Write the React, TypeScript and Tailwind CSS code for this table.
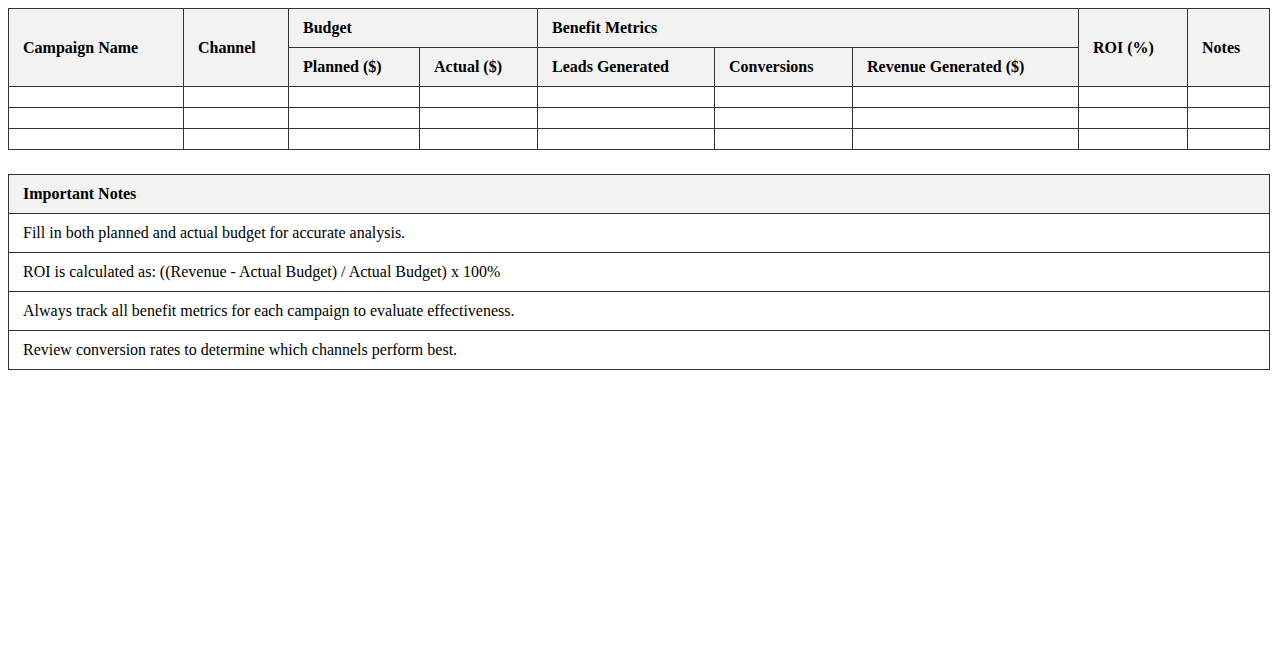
const NOTES = [
  "Fill in both planned and actual budget for accurate analysis.",
  "ROI is calculated as: ((Revenue - Actual Budget) / Actual Budget) x 100%",
  "Always track all benefit metrics for each campaign to evaluate effectiveness.",
  "Review conversion rates to determine which channels perform best.",
];

const COLS = [175, 105, 131, 118, 177, 138, 226, 109, 82];

const th =
  "border border-[#333] bg-[#f2f2f2] px-[14px] py-[10px] text-left font-bold align-middle";
const td = "border border-[#333] px-[14px] py-[10px] h-[21px]";

export default function App() {
  return (
    <div className="m-2 font-['Liberation_Serif',serif] text-[16px] leading-[normal] text-black bg-white">
      {/* Campaign tracking table */}
      <table className="w-full table-fixed border-collapse">
        <colgroup>
          {COLS.map((w, i) => (
            <col key={i} style={{ width: w }} />
          ))}
        </colgroup>
        <thead>
          <tr>
            <th rowSpan={2} className={th}>
              Campaign Name
            </th>
            <th rowSpan={2} className={th}>
              Channel
            </th>
            <th colSpan={2} className={th}>
              Budget
            </th>
            <th colSpan={3} className={th}>
              Benefit Metrics
            </th>
            <th rowSpan={2} className={th}>
              ROI (%)
            </th>
            <th rowSpan={2} className={th}>
              Notes
            </th>
          </tr>
          <tr>
            <th className={th}>Planned ($)</th>
            <th className={th}>Actual ($)</th>
            <th className={th}>Leads Generated</th>
            <th className={th}>Conversions</th>
            <th className={th}>Revenue Generated ($)</th>
          </tr>
        </thead>
        <tbody>
          {[0, 1, 2].map((r) => (
            <tr key={r}>
              {COLS.map((_, c) => (
                <td key={c} className={td}></td>
              ))}
            </tr>
          ))}
        </tbody>
      </table>

      {/* Important notes */}
      <table className="w-full border-collapse mt-6">
        <thead>
          <tr>
            <th className={th}>Important Notes</th>
          </tr>
        </thead>
        <tbody>
          {NOTES.map((n) => (
            <tr key={n}>
              <td className="border border-[#333] px-[14px] py-[10px]">{n}</td>
            </tr>
          ))}
        </tbody>
      </table>
    </div>
  );
}
